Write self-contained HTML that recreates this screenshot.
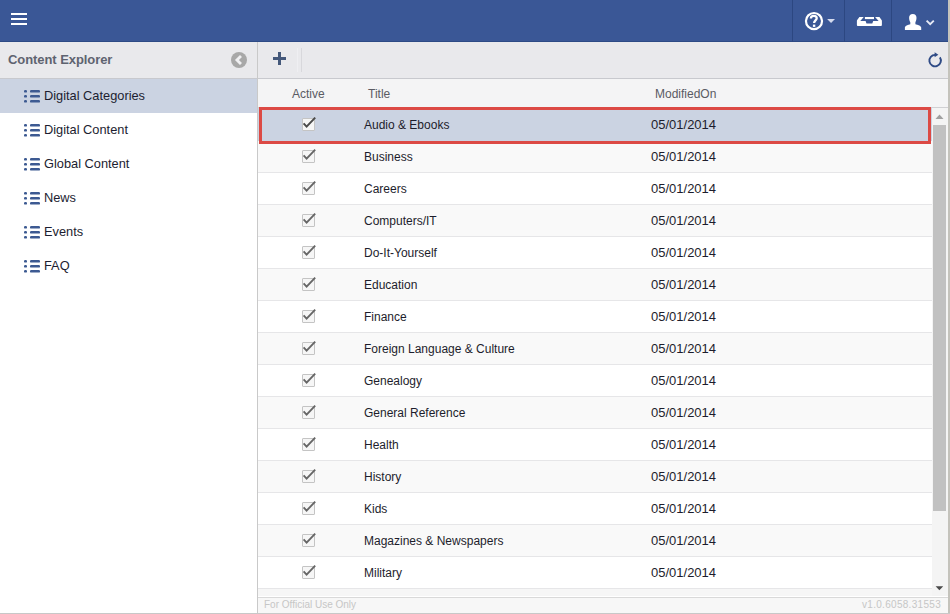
<!DOCTYPE html>
<html><head><meta charset="utf-8">
<style>
*{box-sizing:border-box;margin:0;padding:0}
html,body{width:950px;height:614px;overflow:hidden;background:#fff;font-family:"Liberation Sans",sans-serif;font-size:13px;color:#222;position:relative}
.a{position:absolute}
#top{left:0;top:0;width:950px;height:42px;background:#3a5796;border-bottom:1px solid #2d4a85}
#topline{left:0;top:42px;width:950px;height:1px;background:#eef0fa}
.burger i{position:absolute;left:11px;width:16px;height:2px;background:#fff}
.tsep{top:0;width:1px;height:42px;background:#2c4781}
#lhead{left:0;top:42px;width:257px;height:36px;background:#e9e9ec}
#rhead{left:258px;top:42px;width:690px;height:36px;background:#e9e9ec}
#hline{left:0;top:78px;width:948px;height:1px;background:#c8c9ce}
#vdiv{left:257px;top:42px;width:1px;height:572px;background:#c9c9c9}
#rborder{left:948px;top:0;width:2px;height:614px;background:#c4c3bc}
#bborder{left:0;top:613px;width:950px;height:1px;background:#c8c8c8}
.lt{left:8px;top:52px;font-weight:bold;font-size:13px;letter-spacing:-0.07px;color:#5e6370;line-height:15px}
.nav{left:0;width:257px;height:34px}
.nav.sel{background:#cbd3e2}
.nav .ic{position:absolute;left:24px;top:11px}
.nav .tx{position:absolute;left:44px;top:9px;font-size:12.8px;color:#1c1d30;line-height:15px}
#ghead{left:258px;top:79px;width:690px;height:29px;background:#f4f4f5;border-bottom:1px solid #d0d0d3}
.gh{top:87px;font-size:12px;color:#5a5b63;line-height:14px}
#rowsbg{left:258px;top:108px;width:674px;height:488px;background:#f6f6f6}
.row{position:absolute;left:258px;width:674px;height:32px;background:#fff;border-bottom:1px solid #e6e6e8}
.row.alt{background:#f9f9f9}
.row.sel{background:#cbd3e2;border-bottom:none}
.row .cb{position:absolute;left:44px;top:9px;width:13px;height:13px;border:1px solid #c4c4c4;background:#f6f6f6;border-radius:1px}
.row .ck{position:absolute;left:44px;top:7px}
.row .tt{position:absolute;left:106px;top:9px;font-size:12px;color:#1d1d2c;line-height:14px}
.row .dt{position:absolute;left:393px;top:9px;font-size:13px;color:#1d1d2c;line-height:14px}
.row.sel .cb{top:10px}.row.sel .ck{top:8px}.row .ck path{stroke:#666;stroke-width:1.85}.row.sel .ck path{stroke:#4a4a4a;stroke-width:2}.row.sel .tt,.row.sel .dt{top:10px}
#redbox{left:259px;top:107px;width:672px;height:37px;border:3px solid #dc4a45}
#sbar{left:932px;top:108px;width:16px;height:488px;background:#f4f4f4}
#thumb{left:933px;top:125px;width:13px;height:386px;background:#c1c1c1}
#foot{left:258px;top:597px;width:690px;height:16px;background:#f7f7f7;border-top:1px solid #d9d9d9}
.ft{top:599px;font-size:10px;color:#c6c6c6;line-height:11px}
</style></head><body>
<div class="a" id="top"></div>
<div class="a" id="topline"></div>
<div class="a burger"><i style="top:13px"></i><i style="top:18px"></i><i style="top:23px"></i></div>
<div class="a tsep" style="left:792px"></div>
<div class="a tsep" style="left:844px"></div>
<div class="a tsep" style="left:891px"></div>
<svg class="a" style="left:800px;top:6px" width="40" height="30" viewBox="0 0 40 30"><circle cx="14" cy="15.05" r="8.05" fill="none" stroke="#fff" stroke-width="2.2"/><path d="M10.9 12.4 C10.9 10.6 12 9.8 13.8 9.8 C15.5 9.8 16.7 10.8 16.7 12.2 C16.7 14.2 14.1 14.5 14.1 16.9" fill="none" stroke="#fff" stroke-width="2.3"/><rect x="12.9" y="18.6" width="2.4" height="2.3" fill="#fff"/><path d="M27.1 12.9 L35 12.9 L31.05 16.9 Z" fill="#d5dbee"/></svg>
<svg class="a" style="left:852px;top:10px" width="36" height="22" viewBox="0 0 36 22"><path d="M7.4 7 L11.7 7 L8.3 11 L13.6 11 L14.5 13.6 L20.3 13.6 L21.2 11 L26.6 11 L23.1 7 L27.4 7 L29.6 9.9 Q29.9 10.3 29.9 10.8 L29.9 15 Q29.9 15.9 29 15.9 L5.8 15.9 Q4.9 15.9 4.9 15 L4.9 10.8 Q4.9 10.3 5.2 9.9 Z" fill="#fff"/><rect x="12.9" y="7" width="9.1" height="2.1" fill="#fff"/></svg>
<svg class="a" style="left:900px;top:8px" width="40" height="26" viewBox="0 0 40 26"><path d="M12.8 5.9 C15.2 5.9 16.5 7.4 16.5 9.8 C16.5 12 15.8 13.6 15.4 14.2 L15.4 16.2 C17.5 16.7 21.2 17.7 21.2 19.6 L21.2 22 L4.9 22 L4.9 19.6 C4.9 17.7 8.3 16.7 10.3 16.2 L10.3 14.2 C9.8 13.6 9.1 12 9.1 9.8 C9.1 7.4 10.4 5.9 12.8 5.9 Z" fill="#fff"/><path d="M26.6 12.6 L30.2 16.1 L33.8 12.6" fill="none" stroke="#e6eaf5" stroke-width="1.9"/></svg>
<div class="a" id="lhead"></div>
<div class="a" id="rhead"></div>
<div class="a lt">Content Explorer</div>
<svg class="a" style="left:230px;top:51px" width="18" height="18" viewBox="0 0 18 18"><circle cx="9" cy="9" r="8" fill="#a8a8a8"/><path d="M11 4.9 L6.9 9 L11 13.1" fill="none" stroke="#f0f0f2" stroke-width="2.8"/></svg>
<svg class="a" style="left:270px;top:50px" width="18" height="18" viewBox="0 0 18 18"><path d="M9.5 2 V15 M3 8.5 H16" stroke="#44587a" stroke-width="3"/></svg>
<div class="a" style="left:301px;top:48px;width:1px;height:24px;background:#d8d8dc"></div><div class="a" style="left:297px;top:48px;width:1px;height:24px;background:#efeff2"></div>
<svg class="a" style="left:920px;top:46px" width="30" height="28" viewBox="0 0 30 28"><path d="M15.3 8.85 A5.75 5.75 0 1 0 19.9 11.4" fill="none" stroke="#2f4b86" stroke-width="1.9"/><path d="M14.6 6.2 L18.4 8.8 L14.6 11.3 Z" fill="#2f4b86"/></svg>
<div class="a nav sel" style="top:79px"><svg class="ic" width="17" height="13" viewBox="0 0 17 13"><g fill="#3d5a92"><rect x="0" y="0" width="3" height="2.6" rx="1.2"/><rect x="0" y="5" width="3" height="2.6" rx="1.2"/><rect x="0" y="10" width="3" height="2.6" rx="1.2"/><rect x="6" y="0" width="10" height="2.6" rx="1.2"/><rect x="6" y="5" width="10" height="2.6" rx="1.2"/><rect x="6" y="10" width="10" height="2.6" rx="1.2"/></g></svg><span class="tx">Digital Categories</span></div>
<div class="a nav" style="top:113px"><svg class="ic" width="17" height="13" viewBox="0 0 17 13"><g fill="#3d5a92"><rect x="0" y="0" width="3" height="2.6" rx="1.2"/><rect x="0" y="5" width="3" height="2.6" rx="1.2"/><rect x="0" y="10" width="3" height="2.6" rx="1.2"/><rect x="6" y="0" width="10" height="2.6" rx="1.2"/><rect x="6" y="5" width="10" height="2.6" rx="1.2"/><rect x="6" y="10" width="10" height="2.6" rx="1.2"/></g></svg><span class="tx">Digital Content</span></div>
<div class="a nav" style="top:147px"><svg class="ic" width="17" height="13" viewBox="0 0 17 13"><g fill="#3d5a92"><rect x="0" y="0" width="3" height="2.6" rx="1.2"/><rect x="0" y="5" width="3" height="2.6" rx="1.2"/><rect x="0" y="10" width="3" height="2.6" rx="1.2"/><rect x="6" y="0" width="10" height="2.6" rx="1.2"/><rect x="6" y="5" width="10" height="2.6" rx="1.2"/><rect x="6" y="10" width="10" height="2.6" rx="1.2"/></g></svg><span class="tx">Global Content</span></div>
<div class="a nav" style="top:181px"><svg class="ic" width="17" height="13" viewBox="0 0 17 13"><g fill="#3d5a92"><rect x="0" y="0" width="3" height="2.6" rx="1.2"/><rect x="0" y="5" width="3" height="2.6" rx="1.2"/><rect x="0" y="10" width="3" height="2.6" rx="1.2"/><rect x="6" y="0" width="10" height="2.6" rx="1.2"/><rect x="6" y="5" width="10" height="2.6" rx="1.2"/><rect x="6" y="10" width="10" height="2.6" rx="1.2"/></g></svg><span class="tx">News</span></div>
<div class="a nav" style="top:215px"><svg class="ic" width="17" height="13" viewBox="0 0 17 13"><g fill="#3d5a92"><rect x="0" y="0" width="3" height="2.6" rx="1.2"/><rect x="0" y="5" width="3" height="2.6" rx="1.2"/><rect x="0" y="10" width="3" height="2.6" rx="1.2"/><rect x="6" y="0" width="10" height="2.6" rx="1.2"/><rect x="6" y="5" width="10" height="2.6" rx="1.2"/><rect x="6" y="10" width="10" height="2.6" rx="1.2"/></g></svg><span class="tx">Events</span></div>
<div class="a nav" style="top:249px"><svg class="ic" width="17" height="13" viewBox="0 0 17 13"><g fill="#3d5a92"><rect x="0" y="0" width="3" height="2.6" rx="1.2"/><rect x="0" y="5" width="3" height="2.6" rx="1.2"/><rect x="0" y="10" width="3" height="2.6" rx="1.2"/><rect x="6" y="0" width="10" height="2.6" rx="1.2"/><rect x="6" y="5" width="10" height="2.6" rx="1.2"/><rect x="6" y="10" width="10" height="2.6" rx="1.2"/></g></svg><span class="tx">FAQ</span></div>
<div class="a" id="hline"></div>
<div class="a" id="ghead"></div>
<div class="a gh" style="left:292px">Active</div>
<div class="a gh" style="left:368px">Title</div>
<div class="a gh" style="left:655px">ModifiedOn</div>
<div class="a" id="rowsbg"></div>
<div class="row sel" style="top:108px;height:33px"><span class="cb"></span><svg class="ck" width="16" height="14" viewBox="0 0 16 14"><path d="M1.6 7.4 L4.6 10.6 L13.2 1.6" fill="none" stroke="#4a4a4a" stroke-width="2"/></svg><span class="tt">Audio &amp; Ebooks</span><span class="dt">05/01/2014</span></div>
<div class="row alt" style="top:141px"><span class="cb"></span><svg class="ck" width="16" height="14" viewBox="0 0 16 14"><path d="M1.6 7.4 L4.6 10.6 L13.2 1.6" fill="none" stroke="#4a4a4a" stroke-width="2"/></svg><span class="tt">Business</span><span class="dt">05/01/2014</span></div>
<div class="row" style="top:173px"><span class="cb"></span><svg class="ck" width="16" height="14" viewBox="0 0 16 14"><path d="M1.6 7.4 L4.6 10.6 L13.2 1.6" fill="none" stroke="#4a4a4a" stroke-width="2"/></svg><span class="tt">Careers</span><span class="dt">05/01/2014</span></div>
<div class="row alt" style="top:205px"><span class="cb"></span><svg class="ck" width="16" height="14" viewBox="0 0 16 14"><path d="M1.6 7.4 L4.6 10.6 L13.2 1.6" fill="none" stroke="#4a4a4a" stroke-width="2"/></svg><span class="tt">Computers/IT</span><span class="dt">05/01/2014</span></div>
<div class="row" style="top:237px"><span class="cb"></span><svg class="ck" width="16" height="14" viewBox="0 0 16 14"><path d="M1.6 7.4 L4.6 10.6 L13.2 1.6" fill="none" stroke="#4a4a4a" stroke-width="2"/></svg><span class="tt">Do-It-Yourself</span><span class="dt">05/01/2014</span></div>
<div class="row alt" style="top:269px"><span class="cb"></span><svg class="ck" width="16" height="14" viewBox="0 0 16 14"><path d="M1.6 7.4 L4.6 10.6 L13.2 1.6" fill="none" stroke="#4a4a4a" stroke-width="2"/></svg><span class="tt">Education</span><span class="dt">05/01/2014</span></div>
<div class="row" style="top:301px"><span class="cb"></span><svg class="ck" width="16" height="14" viewBox="0 0 16 14"><path d="M1.6 7.4 L4.6 10.6 L13.2 1.6" fill="none" stroke="#4a4a4a" stroke-width="2"/></svg><span class="tt">Finance</span><span class="dt">05/01/2014</span></div>
<div class="row alt" style="top:333px"><span class="cb"></span><svg class="ck" width="16" height="14" viewBox="0 0 16 14"><path d="M1.6 7.4 L4.6 10.6 L13.2 1.6" fill="none" stroke="#4a4a4a" stroke-width="2"/></svg><span class="tt">Foreign Language &amp; Culture</span><span class="dt">05/01/2014</span></div>
<div class="row" style="top:365px"><span class="cb"></span><svg class="ck" width="16" height="14" viewBox="0 0 16 14"><path d="M1.6 7.4 L4.6 10.6 L13.2 1.6" fill="none" stroke="#4a4a4a" stroke-width="2"/></svg><span class="tt">Genealogy</span><span class="dt">05/01/2014</span></div>
<div class="row alt" style="top:397px"><span class="cb"></span><svg class="ck" width="16" height="14" viewBox="0 0 16 14"><path d="M1.6 7.4 L4.6 10.6 L13.2 1.6" fill="none" stroke="#4a4a4a" stroke-width="2"/></svg><span class="tt">General Reference</span><span class="dt">05/01/2014</span></div>
<div class="row" style="top:429px"><span class="cb"></span><svg class="ck" width="16" height="14" viewBox="0 0 16 14"><path d="M1.6 7.4 L4.6 10.6 L13.2 1.6" fill="none" stroke="#4a4a4a" stroke-width="2"/></svg><span class="tt">Health</span><span class="dt">05/01/2014</span></div>
<div class="row alt" style="top:461px"><span class="cb"></span><svg class="ck" width="16" height="14" viewBox="0 0 16 14"><path d="M1.6 7.4 L4.6 10.6 L13.2 1.6" fill="none" stroke="#4a4a4a" stroke-width="2"/></svg><span class="tt">History</span><span class="dt">05/01/2014</span></div>
<div class="row" style="top:493px"><span class="cb"></span><svg class="ck" width="16" height="14" viewBox="0 0 16 14"><path d="M1.6 7.4 L4.6 10.6 L13.2 1.6" fill="none" stroke="#4a4a4a" stroke-width="2"/></svg><span class="tt">Kids</span><span class="dt">05/01/2014</span></div>
<div class="row alt" style="top:525px"><span class="cb"></span><svg class="ck" width="16" height="14" viewBox="0 0 16 14"><path d="M1.6 7.4 L4.6 10.6 L13.2 1.6" fill="none" stroke="#4a4a4a" stroke-width="2"/></svg><span class="tt">Magazines &amp; Newspapers</span><span class="dt">05/01/2014</span></div>
<div class="row" style="top:557px"><span class="cb"></span><svg class="ck" width="16" height="14" viewBox="0 0 16 14"><path d="M1.6 7.4 L4.6 10.6 L13.2 1.6" fill="none" stroke="#4a4a4a" stroke-width="2"/></svg><span class="tt">Military</span><span class="dt">05/01/2014</span></div>
<div class="a" id="redbox"></div>
<div class="a" id="sbar"></div>
<div class="a" id="thumb"></div>
<svg class="a" style="left:935px;top:114px" width="9" height="6" viewBox="0 0 9 6"><path d="M0.5 5 L8.5 5 L4.5 0.5 Z" fill="#a0a0a0"/></svg>
<svg class="a" style="left:935px;top:586px" width="9" height="5" viewBox="0 0 9 5"><path d="M0.6 0.2 L8.2 0.2 L4.4 4.2 Z" fill="#4a4a4a"/></svg>
<div class="a" id="foot"></div>
<div class="a ft" style="left:264px">For Official Use Only</div>
<div class="a ft" style="right:9px;letter-spacing:0.3px">v1.0.6058.31553</div>
<div class="a" id="vdiv"></div>
<div class="a" id="rborder"></div>
<div class="a" id="bborder"></div>
</body></html>
